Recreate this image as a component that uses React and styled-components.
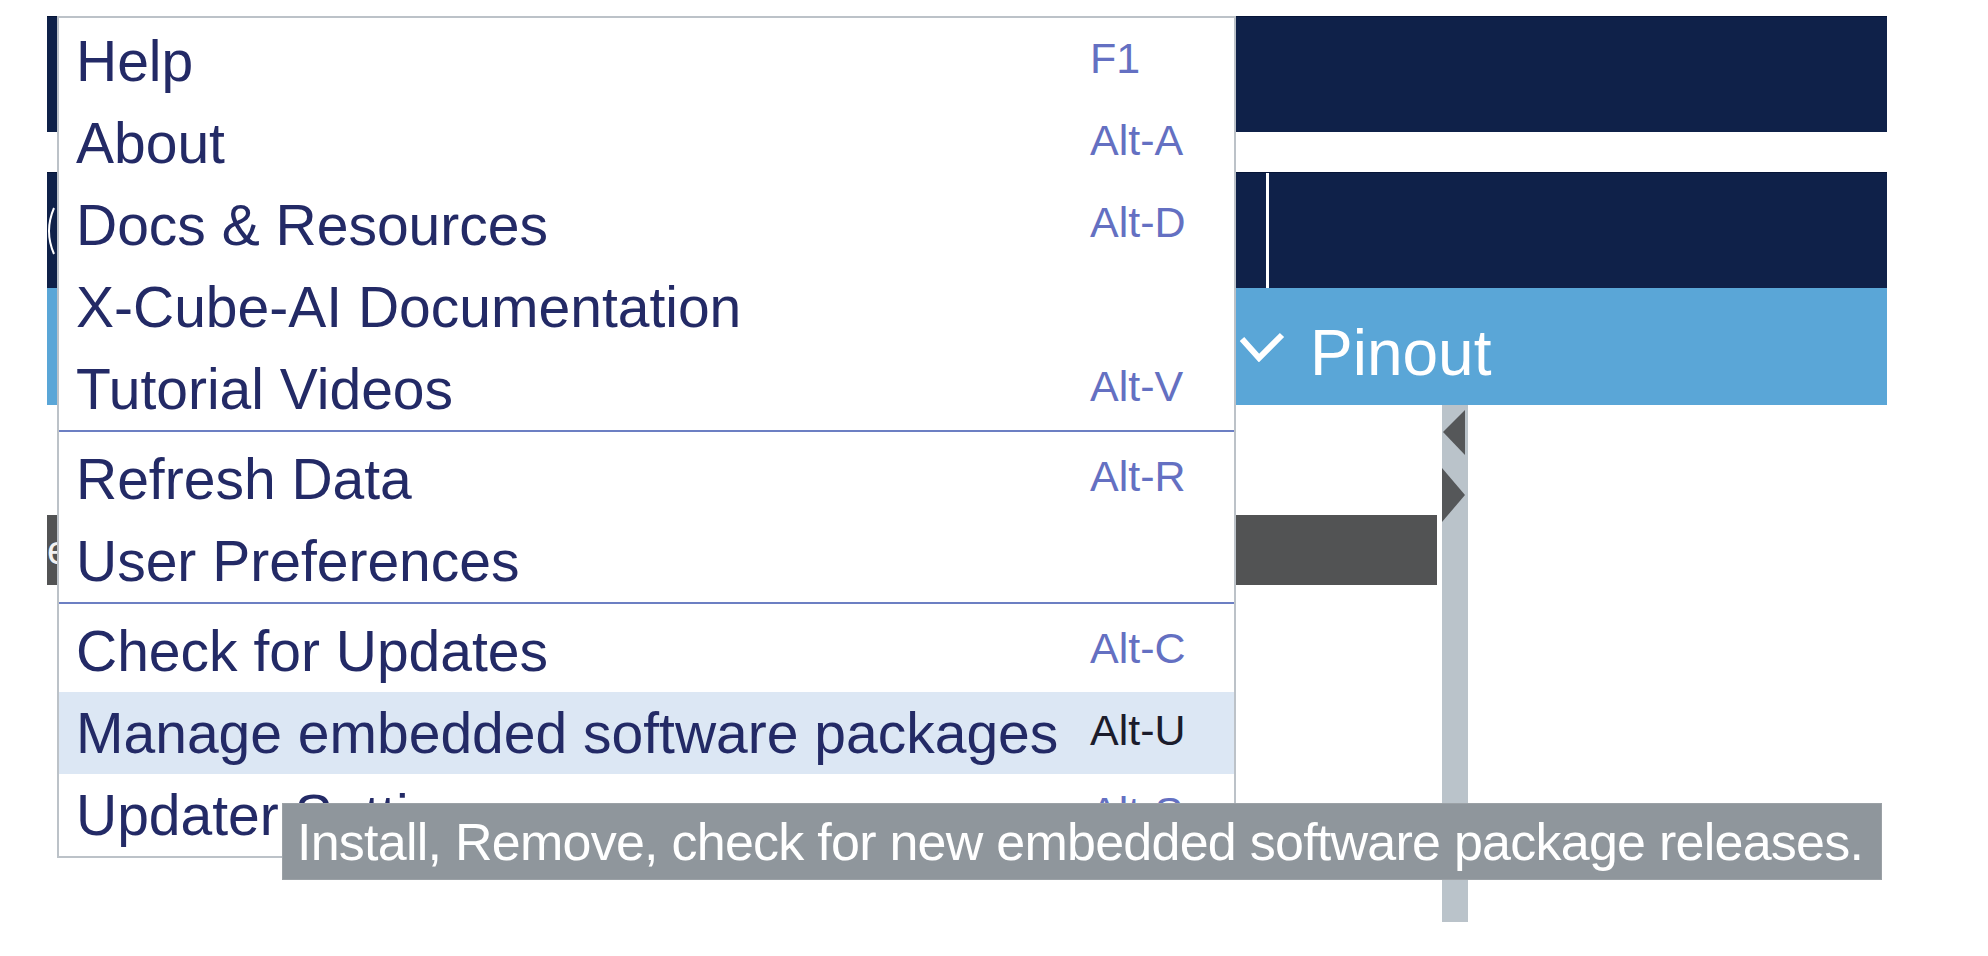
import React from "react";
import styled, { createGlobalStyle } from "styled-components";

const GlobalStyle = createGlobalStyle`
  html, body {
    margin: 0;
    padding: 0;
    background: #ffffff;
    overflow: hidden;
  }
  body {
    font-family: "Liberation Sans", Arial, sans-serif;
  }
`;

const Page = styled.div`
  position: relative;
  width: 1988px;
  height: 956px;
  box-sizing: border-box;
  padding: 16px 0 0 47px;
  background: #ffffff;
  overflow: hidden;
`;

const Workspace = styled.div`
  width: 1840px;
  display: flex;
  flex-direction: column;
`;

const NavBar = styled.div`
  height: 116px;
  background: #0f2149;
  border-top: 1px solid #051437;
  box-sizing: border-box;
`;

const TabBar = styled.div`
  margin-top: 40px;
  height: 116px;
  background: #0f2149;
  border-top: 1px solid #051437;
  box-sizing: border-box;
  display: flex;
  align-items: flex-start;
`;

const LogoArc = styled.svg`
  flex: none;
  margin-top: 34px;
`;

const TabDivider = styled.div`
  margin-left: 1209px;
  width: 3px;
  align-self: stretch;
  background: #ffffff;
`;

const ViewBar = styled.div`
  height: 117px;
  background: #5aa6d7;
  display: flex;
  align-items: center;
  padding-left: 1192px;
  gap: 25px;
  box-sizing: border-box;
`;

const ViewTitle = styled.span`
  color: #ffffff;
  font-size: 64px;
  line-height: 1;
  padding-top: 12px;
`;

const Content = styled.div`
  height: 517px;
  display: flex;
`;

const MainArea = styled.div`
  width: 1390px;
  padding-top: 110px;
  box-sizing: border-box;
`;

const DarkBar = styled.div`
  height: 70px;
  background: #525354;
  display: flex;
  align-items: center;
  color: #f2f2f2;
  font-size: 40px;
  overflow: hidden;
`;

const ScrollTrack = styled.div`
  margin-left: 5px;
  width: 26px;
  background: #bac3ca;
`;

const Menu = styled.div`
  position: absolute;
  left: 57px;
  top: 16px;
  width: 1179px;
  box-sizing: border-box;
  background: #ffffff;
  border: 2px solid #bcc2c8;
  padding-top: 2px;
  display: flex;
  flex-direction: column;
`;

const MenuRow = styled.div`
  height: 82px;
  display: flex;
  align-items: center;
  padding-left: 17px;
  background: ${(p) => (p.$active ? "#dce7f4" : "transparent")};
`;

const MenuLabel = styled.span`
  flex: 1;
  font-size: 57px;
  line-height: 82px;
  color: #232a66;
  white-space: nowrap;
`;

const Shortcut = styled.span`
  width: 144px;
  flex: none;
  font-size: 43px;
  line-height: 1;
  margin-bottom: 6px;
  color: ${(p) => (p.$active ? "#1b1c2c" : "#6470c2")};
`;

const Separator = styled.div`
  height: 2px;
  background: #6c7fc3;
  margin-bottom: 6px;
`;

const Tooltip = styled.div`
  position: absolute;
  left: 282px;
  top: 803px;
  width: 1600px;
  height: 77px;
  box-sizing: border-box;
  background: #8f969c;
  border: 1px solid #9ba1a6;
  color: #ffffff;
  font-size: 52px;
  letter-spacing: -0.75px;
  padding-left: 14px;
  display: flex;
  align-items: center;
  white-space: nowrap;
`;

const groups = [
  [
    { label: "Help", key: "F1" },
    { label: "About", key: "Alt-A" },
    { label: "Docs & Resources", key: "Alt-D" },
    { label: "X-Cube-AI Documentation", key: "" },
    { label: "Tutorial Videos", key: "Alt-V" },
  ],
  [
    { label: "Refresh Data", key: "Alt-R" },
    { label: "User Preferences", key: "" },
  ],
  [
    { label: "Check for Updates", key: "Alt-C" },
    { label: "Manage embedded software packages", key: "Alt-U", active: true },
    { label: "Updater Settings", key: "Alt-S" },
  ],
];

export default function App() {
  return (
    <>
      <GlobalStyle />
      <Page>
        <Workspace>
          <NavBar />
          <TabBar>
            <LogoArc width="10" height="48" viewBox="0 0 10 48">
              <path d="M7 1 Q -3 24 7 47" stroke="#ffffff" strokeWidth="2" fill="none" />
            </LogoArc>
            <TabDivider />
          </TabBar>
          <ViewBar>
            <svg width="46" height="30" viewBox="0 0 46 30">
              <polyline
                points="3,7 20,26 43,3"
                fill="none"
                stroke="#ffffff"
                strokeWidth="6"
              />
            </svg>
            <ViewTitle>Pinout</ViewTitle>
          </ViewBar>
          <Content>
            <MainArea>
              <DarkBar>e</DarkBar>
            </MainArea>
            <ScrollTrack>
              <svg width="26" height="120" viewBox="0 0 26 120">
                <polygon points="23,5 1,27 23,50" fill="#555759" />
                <polygon points="0,63 23,90 0,117" fill="#555759" />
              </svg>
            </ScrollTrack>
          </Content>
        </Workspace>

        <Menu>
          {groups.map((items, gi) => (
            <React.Fragment key={gi}>
              {gi > 0 && <Separator />}
              {items.map((it) => (
                <MenuRow key={it.label} $active={it.active}>
                  <MenuLabel>{it.label}</MenuLabel>
                  <Shortcut $active={it.active}>{it.key}</Shortcut>
                </MenuRow>
              ))}
            </React.Fragment>
          ))}
        </Menu>

        <Tooltip>Install, Remove, check for new embedded software package releases.</Tooltip>
      </Page>
    </>
  );
}
